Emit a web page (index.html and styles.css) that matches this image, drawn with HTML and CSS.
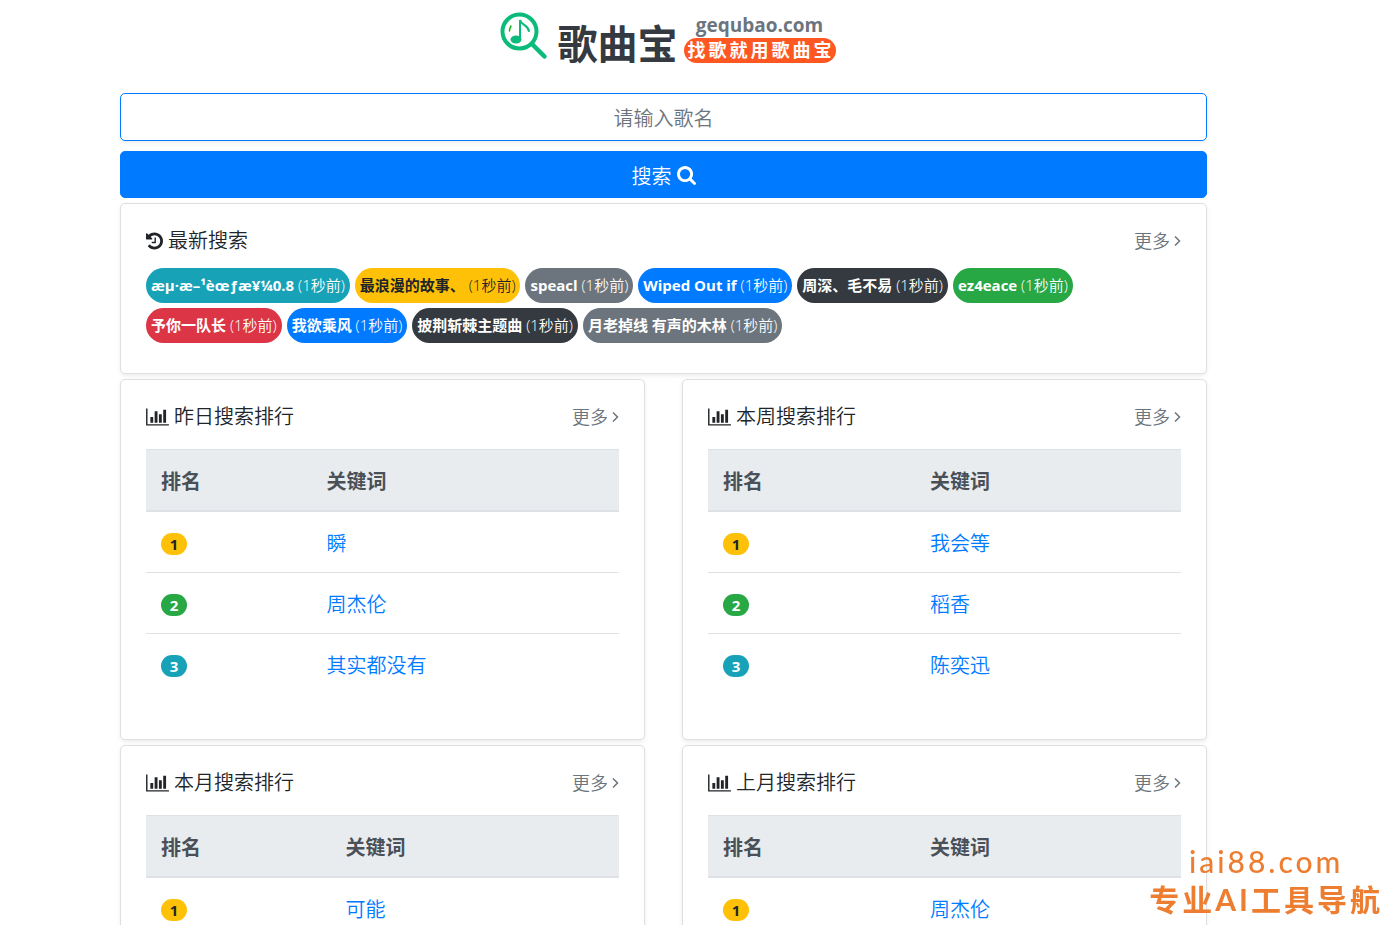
FILE: index.html
```html
<!DOCTYPE html>
<html lang="zh-CN">
<head>
    <meta charset="UTF-8">
    <meta name="viewport" content="width=device-width, initial-scale=1.0">
    <title>歌曲宝</title>
    <link rel="stylesheet" href="styles.css">
</head>
<body>
    <svg class="sprite" aria-hidden="true">
        <symbol id="icon-search" viewBox="0 0 1664 1664">
            <path d="M1152 704q0-185-131.5-316.5T704 256 387.5 387.5 256 704t131.5 316.5T704 1152t316.5-131.5T1152 704zm512 832q0 52-38 90t-90 38q-54 0-90-38l-343-342q-179 124-399 124-143 0-273.5-55.5t-225-150-150-225T0 704t55.5-273.5 150-225 225-150T704 0t273.5 55.5 225 150 150 225T1408 704q0 220-124 399l343 343q37 37 37 90z"/>
        </symbol>
        <symbol id="icon-history" viewBox="0 0 1536 1792">
            <path d="M1536 896q0 156-61 298t-164 245-245 164-298 61q-172 0-327-72.5T177 1387q-7-10-6.5-22.5t8.5-20.5l137-138q10-9 25-9 16 2 23 12 73 95 179 147t225 52q104 0 198.5-40.5T1130 1258t109.5-163.5T1280 896t-40.5-198.5T1130 534 966.5 424.5 768 384q-98 0-188 35.5T420 521l137 138q31 30 14 69-17 40-59 40H64q-26 0-45-19T0 704V256q0-42 40-59 39-17 69 14l130 129q107-101 244.5-156.5T768 128q156 0 298 61t245 164 164 245 61 298zM896 608v448q0 14-9 23t-23 9H544q-14 0-23-9t-9-23v-64q0-14 9-23t23-9h224V608q0-14 9-23t23-9h64q14 0 23 9t9 23z"/>
        </symbol>
        <symbol id="icon-chart" viewBox="0 0 2048 1792">
            <path d="M640 896v512H384V896h256zm384-512v1024H768V384h256zm1024 1152v128H0V128h128v1408h1920zm-640-896v768h-256V640h256zm384-384v1152h-256V256h256z"/>
        </symbol>
        <symbol id="icon-angle" viewBox="0 0 7 12">
            <path d="M1 1.5 5.5 6 1 10.5" fill="none" stroke="currentColor" stroke-width="1.5"/>
        </symbol>
    </svg>

    <div class="container">
        <header class="header">
            <svg class="logo" viewBox="0 0 48 48" fill="none" stroke="#0bbb7b" stroke-linecap="round">
                <circle cx="19.500" cy="19.500" r="17" stroke-width="4"/>
                <path d="M32 32l12.500 12.500" stroke-width="4.500"/>
                <path d="M20 27V8c1 5 8 5 9 11" stroke-width="2"/>
                <ellipse cx="16" cy="27.500" rx="5.500" ry="4" fill="#0bbb7b" stroke="none"/>
                <path d="M11 14c-1 1.500-1.500 3-1.500 5" stroke="#12b312" stroke-width="1.500"/>
            </svg>
            <h1 class="site-name">歌曲宝</h1>
            <div class="site-info">
                <span class="domain">gequbao.com</span>
                <span class="slogan">找歌就用歌曲宝</span>
            </div>
        </header>

        <form class="search-form">
            <input type="text" class="search-input" placeholder="请输入歌名" aria-label="请输入歌名">
            <button type="submit" class="search-button">搜索 <svg class="icon-search"><use href="#icon-search"/></svg></button>
        </form>

        <section class="card">
            <div class="card-head">
                <h2 class="card-title"><svg class="icon-history"><use href="#icon-history"/></svg>最新搜索</h2>
                <a class="more" href="#">更多<svg class="icon-angle"><use href="#icon-angle"/></svg></a>
            </div>
            <div class="tags">
                <a class="tag info" href="#"><b>æµ·æ–¹èœƒæ¥¼0.8</b> (1秒前)</a>
                <a class="tag warning" href="#"><b>最浪漫的故事、</b> (1秒前)</a>
                <a class="tag secondary" href="#"><b>speacl</b> (1秒前)</a>
                <a class="tag primary" href="#"><b>Wiped Out if</b> (1秒前)</a>
                <a class="tag dark" href="#"><b>周深、毛不易</b> (1秒前)</a>
                <a class="tag success" href="#"><b>ez4eace</b> (1秒前)</a>
                <a class="tag danger" href="#"><b>予你一队长</b> (1秒前)</a>
                <a class="tag primary" href="#"><b>我欲乘风</b> (1秒前)</a>
                <a class="tag dark" href="#"><b>披荆斩棘主题曲</b> (1秒前)</a>
                <a class="tag secondary" href="#"><b>月老掉线 有声的木林</b> (1秒前)</a>
            </div>
        </section>

        <div class="ranks">
            <section class="card">
                <div class="card-head">
                    <h2 class="card-title"><svg class="icon-chart"><use href="#icon-chart"/></svg>昨日搜索排行</h2>
                    <a class="more" href="#">更多<svg class="icon-angle"><use href="#icon-angle"/></svg></a>
                </div>
                <table class="table">
                    <thead>
                        <tr><th>排名</th><th>关键词</th></tr>
                    </thead>
                    <tbody>
                        <tr><td><span class="num warning">1</span></td><td><a href="#">瞬</a></td></tr>
                        <tr><td><span class="num success">2</span></td><td><a href="#">周杰伦</a></td></tr>
                        <tr><td><span class="num info">3</span></td><td><a href="#">其实都没有</a></td></tr>
                    </tbody>
                </table>
            </section>

            <section class="card">
                <div class="card-head">
                    <h2 class="card-title"><svg class="icon-chart"><use href="#icon-chart"/></svg>本周搜索排行</h2>
                    <a class="more" href="#">更多<svg class="icon-angle"><use href="#icon-angle"/></svg></a>
                </div>
                <table class="table">
                    <thead>
                        <tr><th>排名</th><th>关键词</th></tr>
                    </thead>
                    <tbody>
                        <tr><td><span class="num warning">1</span></td><td><a href="#">我会等</a></td></tr>
                        <tr><td><span class="num success">2</span></td><td><a href="#">稻香</a></td></tr>
                        <tr><td><span class="num info">3</span></td><td><a href="#">陈奕迅</a></td></tr>
                    </tbody>
                </table>
            </section>

            <section class="card">
                <div class="card-head">
                    <h2 class="card-title"><svg class="icon-chart"><use href="#icon-chart"/></svg>本月搜索排行</h2>
                    <a class="more" href="#">更多<svg class="icon-angle"><use href="#icon-angle"/></svg></a>
                </div>
                <table class="table">
                    <thead>
                        <tr><th class="col-month">排名</th><th>关键词</th></tr>
                    </thead>
                    <tbody>
                        <tr><td><span class="num warning">1</span></td><td><a href="#">可能</a></td></tr>
                    </tbody>
                </table>
            </section>

            <section class="card">
                <div class="card-head">
                    <h2 class="card-title"><svg class="icon-chart"><use href="#icon-chart"/></svg>上月搜索排行</h2>
                    <a class="more" href="#">更多<svg class="icon-angle"><use href="#icon-angle"/></svg></a>
                </div>
                <table class="table">
                    <thead>
                        <tr><th>排名</th><th>关键词</th></tr>
                    </thead>
                    <tbody>
                        <tr><td><span class="num warning">1</span></td><td><a href="#">周杰伦</a></td></tr>
                    </tbody>
                </table>
            </section>
        </div>
    </div>

    <div class="watermark">
        <div>iai88.com</div>
        <div class="watermark-name">专业AI工具导航</div>
    </div>
</body>
</html>
```
FILE: styles.css
```css
* {
    box-sizing: border-box;
}
body {
    margin: 0;
    padding: 0 184px 0 120px;
    background-color: #fff;
    color: #212529;
    font-family: "Open Sans", "Noto Sans CJK SC", sans-serif;
    font-size: 20px;
    font-weight: 350;
    line-height: 30px;
}
a {
    color: #007bff;
    text-decoration: none;
}
b {
    font-weight: 700;
}
svg {
    fill: currentColor;
}
.sprite {
    display: none;
}

/* header */
.header {
    display: flex;
    justify-content: center;
    align-items: flex-start;
    padding: 12px 0 21px 8px;
}
.logo {
    width: 48px;
    height: 48px;
    margin-right: 10px;
    fill: none;
}
.site-name {
    margin: 0 6px 0 0;
    color: #343a40;
    font-family: "Noto Sans CJK SC", sans-serif;
    font-size: 40px;
    line-height: 60px;
}
.site-info {
    display: flex;
    flex-direction: column;
    align-items: center;
    font-weight: bold;
}
.domain {
    color: #6c757d;
    font-size: 19px;
    line-height: 26px;
}
.slogan {
    padding: 0 1px 0 4px;
    border-radius: 13px;
    background-color: #ff5722;
    color: #fff;
    font-size: 18px;
    line-height: 25px;
    letter-spacing: 3px;
}

/* search */
.search-form {
    display: flex;
    flex-direction: column;
    gap: 10px;
    margin-bottom: 5px;
}
.search-input,
.search-button {
    width: 100%;
    height: 48px;
    padding: 2px 0 0;
    border: 1px solid #007bff;
    border-radius: 5px;
    font-family: inherit;
    font-size: 20px;
    font-weight: 350;
    text-align: center;
}
.search-input {
    box-shadow: 0 2px 4px rgba(0, 0, 0, 0.075);
}
.search-input::placeholder {
    color: #6c757d;
}
.search-button {
    display: flex;
    justify-content: center;
    align-items: center;
    gap: 5px;
    height: 47px;
    background-color: #007bff;
    color: #fff;
    cursor: pointer;
}
.search-button:hover {
    background-color: #0069d9;
}
.icon-search {
    width: 19px;
    height: 19px;
}

/* cards */
.card {
    padding: 25px;
    border: 1px solid #dfdfdf;
    border-radius: 5px;
    background-color: #fff;
    box-shadow: 0 2px 4px rgba(0, 0, 0, 0.075);
}
.card-head {
    display: flex;
    justify-content: space-between;
    height: 24px;
    margin-bottom: 15px;
}
.card-title {
    display: flex;
    align-items: center;
    gap: 5px;
    margin: 0;
    font-size: 20px;
    font-weight: 350;
    line-height: 26px;
}
.icon-history {
    width: 17px;
    height: 20px;
}
.icon-chart {
    width: 23px;
    height: 20px;
}
.more {
    display: flex;
    align-items: center;
    gap: 4px;
    color: #6c757d;
    font-size: 18px;
    line-height: 22px;
}
.icon-angle {
    width: 7px;
    height: 12px;
}
.tags {
    display: flex;
    flex-wrap: wrap;
    gap: 5px;
    margin-bottom: 5px;
}
.tag {
    padding: 0 5px;
    border-radius: 18px;
    font-size: 15px;
    line-height: 35px;
}
.info {
    background-color: #17a2b8;
    color: #fff;
}
.warning {
    background-color: #ffc107;
    color: #212529;
}
.secondary {
    background-color: #6c757d;
    color: #fff;
}
.primary {
    background-color: #007bff;
    color: #fff;
}
.dark {
    background-color: #343a40;
    color: #fff;
}
.success {
    background-color: #28a745;
    color: #fff;
}
.danger {
    background-color: #dc3545;
    color: #fff;
}

/* rankings */
.ranks {
    display: grid;
    grid-template-columns: 1fr 1fr;
    gap: 5px 37px;
    margin-top: 5px;
}
.ranks .card-head {
    margin-bottom: 20px;
}
.table {
    width: 100%;
    margin-bottom: 20px;
    border-spacing: 0;
}
.table th,
.table td {
    height: 61px;
    padding: 4px 15px 0;
    border-top: 1px solid #dee2e6;
    text-align: left;
}
.table th {
    height: 63px;
    border-bottom: 2px solid #dee2e6;
    background-color: #e9ecef;
    color: #495057;
    font-weight: bold;
}
.table tbody tr:first-child td {
    height: 60px;
    border-top: none;
}
.col-month {
    width: 39%;
}
.num {
    display: block;
    width: 26px;
    border-radius: 11px;
    font-size: 15px;
    font-weight: bold;
    line-height: 22px;
    text-align: center;
}

.watermark {
    position: fixed;
    right: 8px;
    bottom: 7px;
    color: #ed7d31;
    font-family: Lato, "Noto Sans CJK SC", sans-serif;
    font-size: 30px;
    font-weight: 500;
    line-height: 38px;
    letter-spacing: 3px;
    text-align: center;
}
.watermark-name {
    font-weight: bold;
}
```
